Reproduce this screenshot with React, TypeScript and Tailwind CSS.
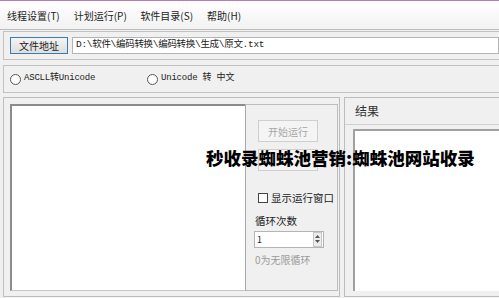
import React from "react";

const cjk = '"Noto Sans CJK SC", "Noto Sans", sans-serif';
const mono = '"Liberation Mono", "Noto Sans CJK SC", monospace';

const menus = ["线程设置(T)", "计划运行(P)", "软件目录(S)", "帮助(H)"];

const Radio: React.FC<{ label: string }> = ({ label }) => (
  <div className="flex items-center gap-[3px]">
    <span className="w-[11px] h-[11px] rounded-full border border-[#555] bg-white" />
    <span className="text-[9px] text-[#222] tracking-[-0.2px]" style={{ fontFamily: mono }}>
      {label}
    </span>
  </div>
);

const DisabledButton: React.FC<{ label?: string }> = ({ label }) => (
  <div className="w-[60px] h-[22px] border border-[#cfcfcf] bg-[#f4f4f4] flex items-center justify-center text-[10px] text-[#a6a6a6]">
    {label}
  </div>
);

export default function App() {
  return (
    <div
      className="relative w-[499px] h-[298px] overflow-hidden bg-[#f0f0f0] flex flex-col text-[#222]"
      style={{ fontFamily: cjk }}
    >
      <div className="h-[1px] bg-[#b97bb9] shrink-0" />

      {/* menu bar */}
      <div className="h-[28px] shrink-0 flex items-center pl-[7px] bg-gradient-to-b from-white to-[#f2f2f2] text-[10px]">
        {menus.map((m) => (
          <div key={m} className="w-[66.7px]">
            {m}
          </div>
        ))}
      </div>
      <div className="h-[2px] shrink-0 border-t border-[#bcbcbc] border-b-white" />

      {/* file row */}
      <div className="ml-[3px] h-[29px] shrink-0 border-l border-t border-b border-[#c2c2c2] flex items-center pl-[6px] gap-[4px]">
        <div className="w-[58px] h-[17px] border border-[#3d7bad] bg-gradient-to-b from-[#f4f4f4] to-[#dedede] flex items-center justify-center text-[10px]">
          文件地址
        </div>
        <div
          className="flex-1 h-[17px] bg-white border border-[#b4b4b4] flex items-center pl-[3px] text-[9.5px] tracking-[-0.3px]"
          style={{ fontFamily: mono }}
        >
          D:\软件\编码转换\编码转换\生成\原文.txt
        </div>
      </div>

      <div className="h-[5px] shrink-0" />

      {/* radio row */}
      <div className="ml-[3px] h-[28px] shrink-0 border-l border-t border-b border-[#c2c2c2] flex items-center pl-[6px]">
        <div className="w-[137px]">
          <Radio label="ASCLL转Unicode" />
        </div>
        <Radio label="Unicode 转 中文" />
      </div>

      <div className="h-[4px] shrink-0" />

      {/* main area */}
      <div className="flex-1 flex min-h-0 pb-[1px]">
        <div className="ml-[3px] w-[337px] border border-[#bdbdbd] flex pt-[6px] pl-[6px] pb-[5px]">
          <div className="w-[235px] bg-white border-l-2 border-t-2 border-[#8c8c8c] border-b border-b-[#c8c8c8]" />
          <div className="w-[93px] border border-[#bdbdbd] border-l-[#a8a8a8] flex flex-col pl-[12px] pt-[15px]">
            <DisabledButton label="开始运行" />
            <div className="h-[7px]" />
            <DisabledButton />
            <div className="h-[19px]" />
            <div className="flex items-center gap-[3px] text-[10.5px]">
              <span className="w-[10px] h-[10px] border border-[#444] bg-white" />
              显示运行窗口
            </div>
            <div className="h-[8px]" />
            <div className="-ml-[3px] text-[10.5px] leading-[14px]">循环次数</div>
            <div className="-ml-[4px] mt-[3px] w-[70px] h-[17px] bg-white border border-[#b4b4b4] flex items-center">
              <span className="flex-1 pl-[2px] text-[9px]">1</span>
              <div className="w-[9px] h-[15px] mr-[1px] bg-[#ececec] border border-[#c8c8c8] flex flex-col items-center justify-center gap-[2px]">
                <svg width="5" height="3" viewBox="0 0 5 3">
                  <path d="M0 3 L2.5 0 L5 3 Z" fill="#555" />
                </svg>
                <svg width="5" height="3" viewBox="0 0 5 3">
                  <path d="M0 0 L2.5 3 L5 0 Z" fill="#555" />
                </svg>
              </div>
            </div>
            <div className="-ml-[3px] mt-[4px] text-[10px] text-[#9a9a9a]">0为无限循环</div>
          </div>
        </div>

        <div className="ml-[4px] flex-1 border-l border-t border-b border-[#bdbdbd] flex flex-col">
          <div className="h-[27px] shrink-0 border-b border-[#d0d0d0] flex items-center pl-[10px] text-[12px] text-[#333]">
            结果
          </div>
          <div className="flex-1 mt-[4px] ml-[8px] mb-[5px] bg-white border-l-2 border-t-2 border-[#a0a0a0]" />
        </div>
      </div>

      {/* overlay caption */}
      <div
        className="absolute left-[206px] top-[148px] text-[17.5px] font-black text-black leading-[20px] whitespace-nowrap"
        style={{ fontFamily: cjk }}
      >
        秒收录蜘蛛池营销:蜘蛛池网站收录
      </div>
    </div>
  );
}
